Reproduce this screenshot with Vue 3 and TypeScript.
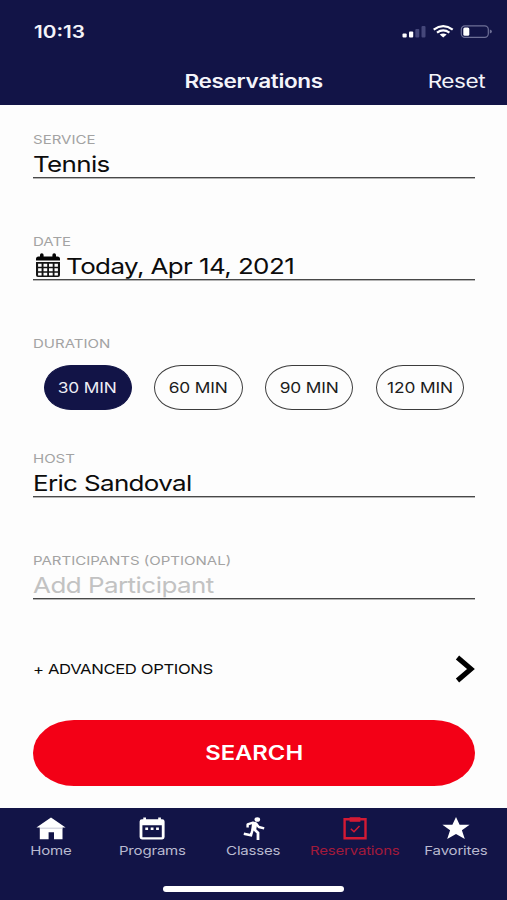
<script setup lang="ts">
import { ref } from 'vue'

interface Tab {
  id: string
  label: string
}

const durations: string[] = ['30 MIN', '60 MIN', '90 MIN', '120 MIN']
const selected = ref<string>('30 MIN')
const activeTab = ref<string>('reservations')

const tabs: Tab[] = [
  { id: 'home', label: 'Home' },
  { id: 'programs', label: 'Programs' },
  { id: 'classes', label: 'Classes' },
  { id: 'reservations', label: 'Reservations' },
  { id: 'favorites', label: 'Favorites' },
]
</script>

<template>
  <div class="screen">
    <header class="header">
      <div class="status">
        <span class="wide time">10:13</span>
        <svg class="status-icons" width="92" height="18" viewBox="0 0 92 18">
          <g fill="#fff">
            <rect x="2.5" y="10.5" width="4.2" height="4" rx="1" />
            <rect x="9" y="8.6" width="4.2" height="5.9" rx="1" />
          </g>
          <g fill="#45477a">
            <rect x="15.3" y="6" width="4" height="8.5" rx="1" />
            <rect x="21.5" y="3" width="4" height="11.5" rx="1" />
          </g>
          <g fill="none" stroke="#fff" stroke-width="2.3">
            <path d="M33.7 6.6Q43.2 -.2 52.7 6.6" />
            <path d="M37 9.6Q43.2 5.3 49.4 9.6" />
          </g>
          <path d="M39.7 11.6Q43.2 9.3 46.7 11.6L43.2 14.5z" fill="#fff" />
          <rect x="61.3" y="2.8" width="27" height="11.6" rx="3.6" fill="none" stroke="#6d6f96" stroke-width="1.2" />
          <rect x="63.3" y="4.5" width="6" height="8.3" rx="1.5" fill="#fff" />
          <path d="M89.8 6.6q2.2.5 2.2 2t-2.2 2z" fill="#6d6f96" />
        </svg>
      </div>
      <div class="nav">
        <h1 class="wide title">Reservations</h1>
        <button class="wide reset">Reset</button>
      </div>
    </header>

    <main class="form">
      <section class="field">
        <label class="wide label">SERVICE</label>
        <div class="input"><span class="wide value">Tennis</span></div>
      </section>

      <section class="field">
        <label class="wide label">DATE</label>
        <div class="input">
          <svg class="calendar" width="24" height="25" viewBox="0 0 24 25">
            <path d="M0 7.5V6Q0 3.5 2.5 3.5H4V2Q4 .3 5.8.3T7.6 2V3.5H16.4V2Q16.4.3 18.2.3T20 2V3.5H21.5Q24 3.5 24 6V7.5z" fill="#050505" />
            <path d="M0 9H24V22Q24 24 22 24H2Q0 24 0 22z" fill="#151515" />
            <g fill="#fff">
              <path d="M2.1 10.8h3.5v3H2.1zM7.5 10.8h3.7v3H7.5zM13 10.8h3.7v3H13zM18.5 10.8h3.4v3h-3.4z" />
              <path d="M2.1 15.3h3.5v2.9H2.1zM7.5 15.3h3.7v2.9H7.5zM13 15.3h3.7v2.9H13zM18.5 15.3h3.4v2.9h-3.4z" />
              <path d="M2.1 19.7h3.5v2.7H2.1zM7.5 19.7h3.7v2.7H7.5zM13 19.7h3.7v2.7H13zM18.5 19.7h3.4v2.7h-3.4z" />
            </g>
          </svg>
          <span class="wide value date">Today, Apr 14, 2021</span>
        </div>
      </section>

      <section class="duration">
        <label class="wide label">DURATION</label>
        <div class="pills">
          <button
            v-for="d in durations"
            :key="d"
            class="pill"
            :class="{ on: d === selected }"
            @click="selected = d"
          >
            <span class="wide pill-text">{{ d }}</span>
          </button>
        </div>
      </section>

      <section class="field">
        <label class="wide label">HOST</label>
        <div class="input"><span class="wide value">Eric Sandoval</span></div>
      </section>

      <section class="field">
        <label class="wide label">PARTICIPANTS (OPTIONAL)</label>
        <div class="input"><span class="wide value placeholder">Add Participant</span></div>
      </section>

      <div class="advanced">
        <span class="wide advanced-text">+ ADVANCED OPTIONS</span>
        <svg width="20" height="28" viewBox="0 0 20 28">
          <path d="M2.5 2.5L16 14L2.5 25.5" fill="none" stroke="#000" stroke-width="5" />
        </svg>
      </div>

      <button class="search"><span class="wide search-text">SEARCH</span></button>
    </main>

    <footer class="tabbar">
      <nav class="tabs">
        <button
          v-for="t in tabs"
          :key="t.id"
          class="tab"
          :class="{ active: t.id === activeTab }"
          @click="activeTab = t.id"
        >
          <svg v-if="t.id === 'home'" width="30" height="24" viewBox="0 0 30 24">
            <path d="M15 .6L29.6 10.5H26.5V22.3H18V15.2H12.6V22.3H3.8V10.5H.4z" fill="#fff" />
            <path d="M3.8 11.2H26.5" stroke="#b9bacb" stroke-width=".8" />
          </svg>
          <svg v-else-if="t.id === 'programs'" width="30" height="24" viewBox="0 0 30 24">
            <path fill-rule="evenodd" d="M5 2.2H6.3V.4H9V2.2H21.2V.4H23.9V2.2H25.2Q27.6 2.2 27.6 4.6V20Q27.6 22.4 25.2 22.4H5Q2.6 22.4 2.6 20V4.6Q2.6 2.2 5 2.2zM5.4 8.3V20.2H24.8V8.3z" fill="#fff" />
            <path d="M8.3 10.5h2.8v2.5H8.3zM13.7 10.5h2.8v2.5h-2.8zM19.1 10.5h2.8v2.5h-2.8z" fill="#fff" />
          </svg>
          <svg v-else-if="t.id === 'classes'" width="30" height="24" viewBox="-1 0 30 24">
            <ellipse cx="18.3" cy="2.5" rx="2.8" ry="2.3" fill="#fff" />
            <path d="M8.6 10.6V7.4L14 5.6L17 6.4L19.8 10L25.2 11.4" fill="none" stroke="#fff" stroke-width="2.4" stroke-linejoin="round" />
            <path d="M13.2 5L18.4 6.2L17 13.7L12.2 12.8z" fill="#fff" />
            <path d="M14.6 11.8L19 15.8V23" fill="none" stroke="#fff" stroke-width="2.8" />
            <path d="M13.8 12L12 18.2L4.8 16.7" fill="none" stroke="#fff" stroke-width="2.5" />
          </svg>
          <svg v-else-if="t.id === 'reservations'" width="30" height="24" viewBox="0 0 30 24">
            <path d="M4.6 2.2H25.5V21.3H4.6z" fill="none" stroke="#d31a34" stroke-width="2.4" />
            <path d="M9.6.2H20.4V4.8H9.6z" fill="#d31a34" />
            <path d="M10.8 11.8L14 14.8L19.5 9" fill="none" stroke="#d31a34" stroke-width="1.5" />
          </svg>
          <svg v-else width="30" height="24" viewBox="0 0 30 24">
            <path d="M15 0L18.6 7.8H28.6L20.9 13.2L23.8 22L15 17L6.2 22L9.1 13.2L1.4 7.8H11.4z" fill="#fff" />
          </svg>
          <span class="wide tab-text">{{ t.label }}</span>
        </button>
      </nav>
      <div class="home-indicator"></div>
    </footer>
  </div>
</template>

<style>
body {
  margin: 0;
  background: #fdfdfd;
}
</style>

<style scoped>
.screen {
  width: 507px;
  height: 900px;
  display: flex;
  flex-direction: column;
  overflow: hidden;
  background: #fdfdfd;
  color: #0c0c0c;
  font-family: Inter, 'Liberation Sans', sans-serif;
}

button {
  border: 0;
  padding: 0;
  background: none;
  color: inherit;
  font: inherit;
}

/* Letterforms are set extended along the horizontal axis. */
.wide {
  display: inline-block;
  white-space: nowrap;
  transform: scaleX(1.22);
  transform-origin: left center;
}

.header {
  flex: none;
  height: 104.5px;
  background: #121447;
  color: #f4f4fa;
}

.status {
  height: 56px;
  padding: 7px 15px 0 34px;
  box-sizing: border-box;
  display: flex;
  align-items: center;
  justify-content: space-between;
}

.time {
  font-size: 17px;
  font-weight: 600;
}

.nav {
  height: 49px;
  padding: 0 21.5px 0 0;
  display: grid;
  grid-template-columns: 85px 1fr 62.5px;
  align-items: center;
}

.title {
  grid-column: 2;
  margin: 0;
  justify-self: center;
  transform-origin: center;
  font-size: 18.5px;
  font-weight: 600;
  letter-spacing: -0.3px;
}

.reset {
  justify-self: end;
  transform-origin: right center;
  font-size: 18.5px;
  letter-spacing: -0.4px;
}

.form {
  flex: none;
  height: 703.5px;
  padding: 25.5px 32px 0 33px;
  box-sizing: border-box;
  display: flex;
  flex-direction: column;
}

.field {
  flex: none;
  height: 102px;
}

.label {
  display: block;
  height: 18px;
  line-height: 19px;
  font-size: 12.3px;
  color: #a3a3a3;
}

.input {
  height: 29px;
  display: flex;
  align-items: center;
  border-bottom: 1px solid #484848;
  box-shadow: 0 1px 0 #b4b4b4;
}

.value {
  position: relative;
  top: 1px;
  line-height: 28px;
  font-size: 22px;
  letter-spacing: -0.55px;
  transform: scaleX(1.18);
}

.date {
  letter-spacing: -0.5px;
}

.placeholder {
  letter-spacing: -0.45px;
  color: #c2c2c2;
}

.calendar {
  flex: none;
  margin: 2px 6.5px 0 2.5px;
}

.duration {
  flex: none;
  height: 115px;
}

.pills {
  display: flex;
  gap: 22.5px;
  padding: 13px 0 0 10.5px;
}

.pill {
  width: 88.3px;
  height: 45px;
  box-sizing: border-box;
  border: 1.4px solid #3c3c3c;
  border-radius: 27px / 22.5px;
  display: flex;
  align-items: center;
  justify-content: center;
  color: #1c1c1c;
}

.pill.on {
  background: #121447;
  border-color: #121447;
  color: #eeeef5;
}

.pill-text,
.search-text,
.tab-text {
  transform-origin: center;
}

.pill-text {
  font-size: 14.2px;
  letter-spacing: -0.1px;
}

.advanced {
  flex: none;
  height: 28px;
  margin-top: 2px;
  display: flex;
  align-items: center;
  justify-content: space-between;
}

.advanced-text {
  font-size: 13.7px;
  letter-spacing: -0.33px;
}

.search {
  flex: none;
  height: 66px;
  margin-top: 36.5px;
  border-radius: 41px / 33px;
  background: #f30016;
  color: #fff;
  display: flex;
  align-items: center;
  justify-content: center;
}

.search-text {
  font-size: 19.5px;
  font-weight: 600;
}

.tabbar {
  flex: 1;
  background: #121447;
  display: flex;
  flex-direction: column;
  align-items: center;
}

.tabs {
  width: 507px;
  display: grid;
  grid-template-columns: repeat(5, 1fr);
  height: 78px;
}

.tab {
  display: flex;
  flex-direction: column;
  align-items: center;
  padding-top: 9px;
  color: #b9bad0;
}

.tab svg {
  flex: none;
}

.tab-text {
  margin-top: 1px;
  line-height: 18px;
  font-size: 12.3px;
  letter-spacing: -0.15px;
}

.tab.active {
  color: #a31a3b;
}

.home-indicator {
  width: 181px;
  height: 6px;
  border-radius: 3px;
  background: #fff;
}
</style>
